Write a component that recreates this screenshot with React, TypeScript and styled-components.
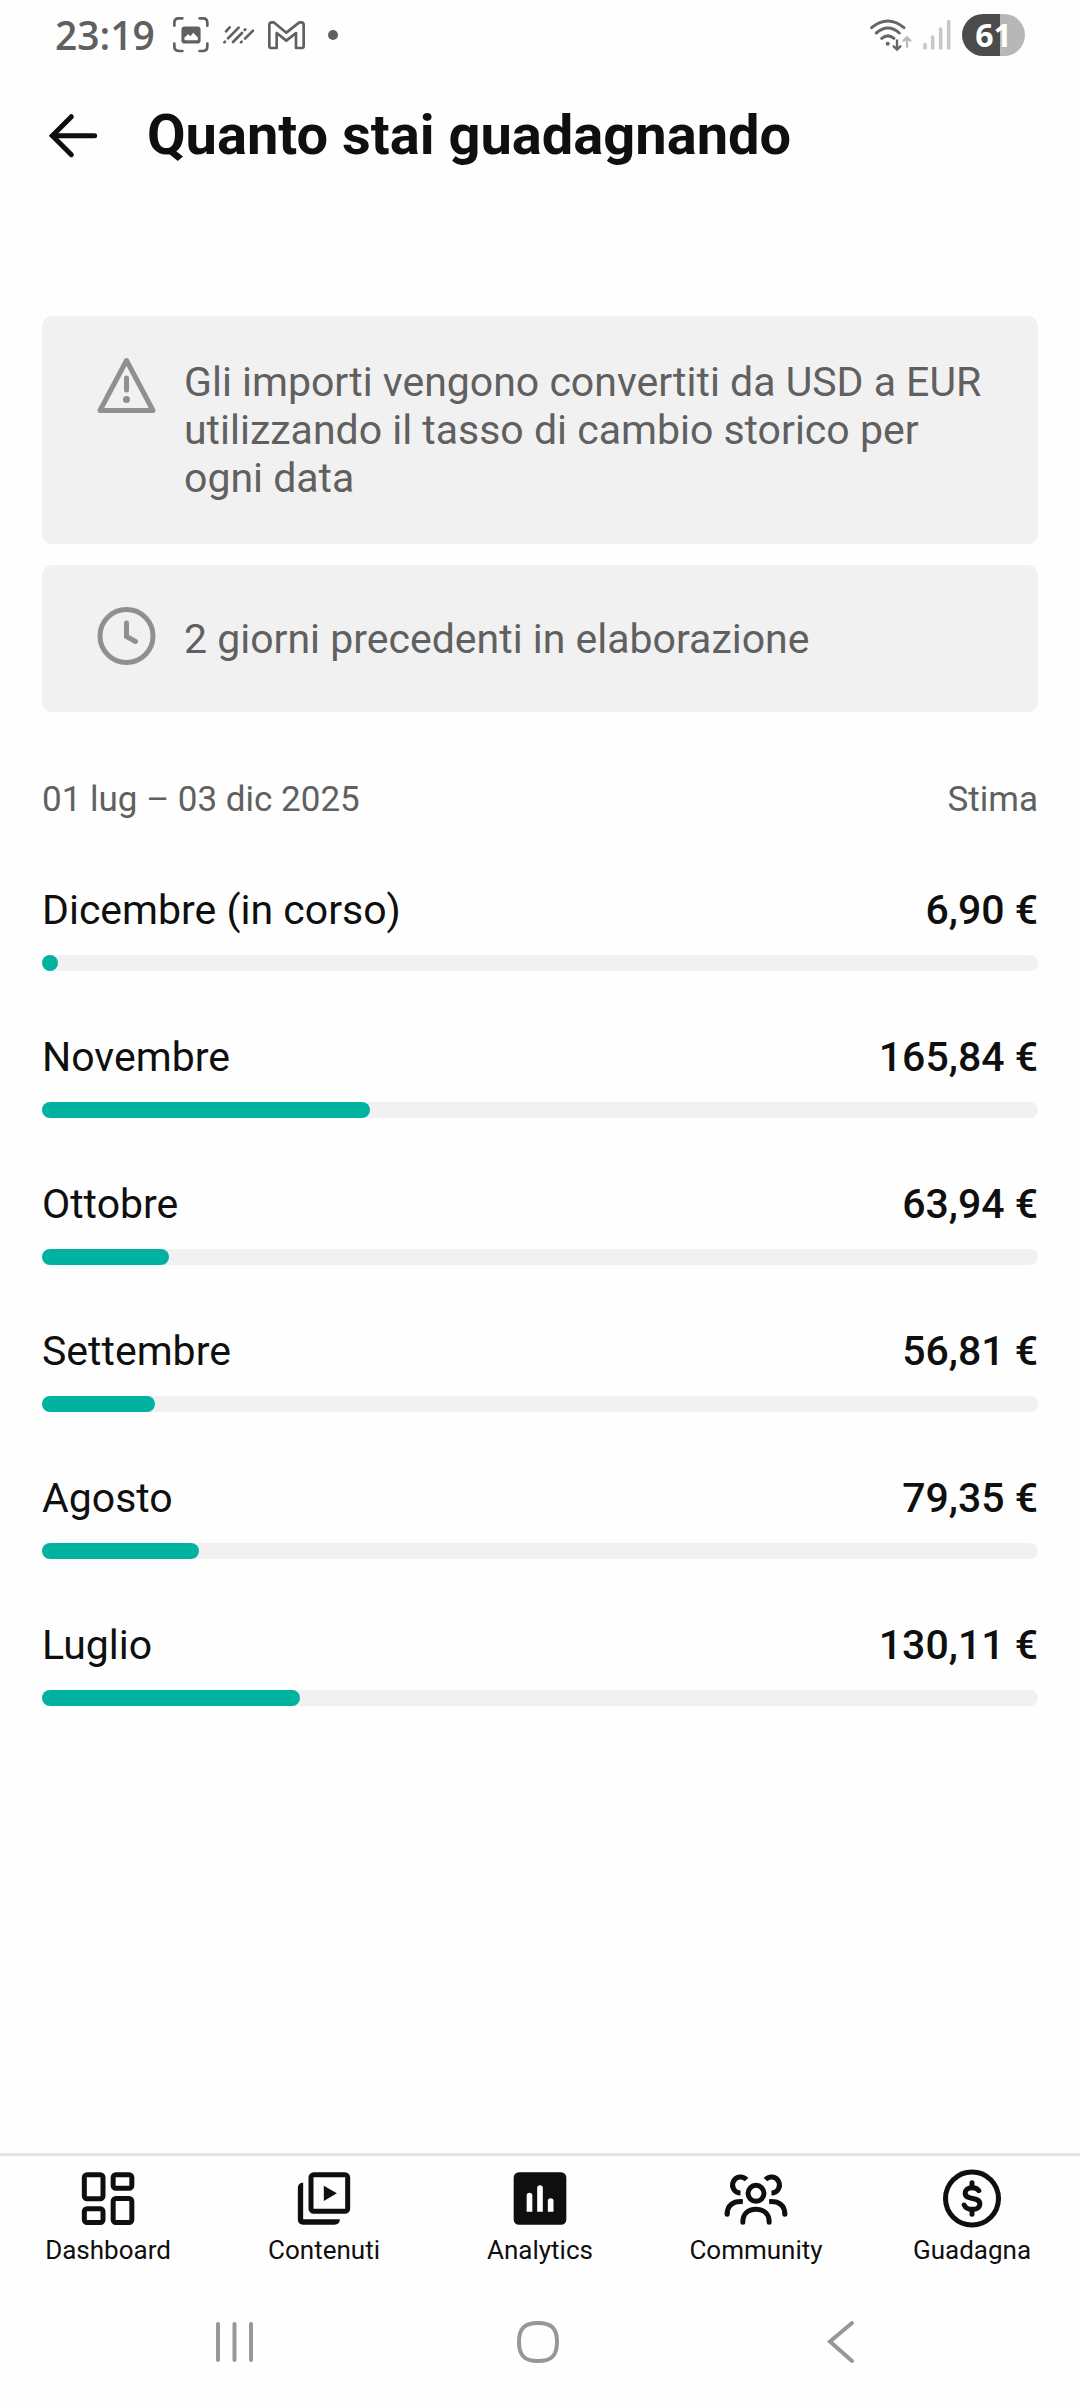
import React from "react";
import styled, { createGlobalStyle } from "styled-components";

const ink = "#0f0f0f";
const muted = "#606060";
const iconGray = "#909090";
const surface = "#f1f1f1";
const teal = "#00b3a1";

const GlobalStyle = createGlobalStyle`
  * { box-sizing: border-box; }
  body {
    margin: 0;
    background: #fefefe;
    color: ${ink};
    font-family: Roboto, "Noto Sans", sans-serif;
  }
  svg { display: block; overflow: visible; flex: none; }
  button { border: 0; padding: 0; background: none; color: inherit; font: inherit; cursor: pointer; }
`;

const Screen = styled.div`
  min-height: 100vh;
  display: flex;
  flex-direction: column;
`;

const StatusBar = styled.div`
  height: 70px;
  padding: 0 55px;
  display: flex;
  align-items: center;
  justify-content: space-between;
  color: ${muted};
`;

const StatusGroup = styled.div<{ $gap: number }>`
  display: flex;
  align-items: center;
  gap: ${(p) => p.$gap}px;
`;

const Clock = styled.time`
  font: 600 39px/48px "Open Sans", "Noto Sans", sans-serif;
`;

const Battery = styled.div`
  width: 63px;
  height: 42px;
  border-radius: 21px;
  display: flex;
  align-items: center;
  justify-content: center;
  background: linear-gradient(90deg, #4b4b4b 61%, #b7b7b7 61%);
  color: #fff;
  font: 700 32px/42px "Open Sans", "Noto Sans", sans-serif;
`;

const Header = styled.header`
  height: 130px;
  padding: 0 42px;
  display: flex;
  align-items: center;
  gap: 42px;
`;

const Title = styled.h1`
  margin: 0;
  font-size: 56px;
  line-height: 64px;
  font-weight: 700;
`;

const Main = styled.main`
  flex: 1;
  padding: 116px 42px 42px;
`;

const Notices = styled.div`
  display: flex;
  flex-direction: column;
  gap: 21px;
`;

const Notice = styled.div`
  padding: 42px 53px;
  display: flex;
  gap: 26px;
  border-radius: 10px;
  background: ${surface};
  color: ${iconGray};
`;

const NoticeText = styled.p<{ $centered?: boolean }>`
  margin: 0;
  align-self: ${(p) => (p.$centered ? "center" : "flex-start")};
  color: ${muted};
  font-size: 41px;
  line-height: 48px;
`;

const NoticeIcon = styled.svg`
  width: 63px;
  height: 63px;
`;

const Period = styled.div`
  margin-top: 66px;
  display: flex;
  justify-content: space-between;
  color: ${muted};
  font-size: 35px;
  line-height: 44px;
`;

const Months = styled.ul`
  margin: 64px 0 0;
  padding: 0;
  list-style: none;
  display: flex;
  flex-direction: column;
  gap: 62px;
`;

const Month = styled.li`
  display: flex;
  flex-direction: column;
  gap: 21px;
`;

const MonthHead = styled.div`
  display: flex;
  justify-content: space-between;
  font-size: 41px;
  line-height: 48px;
`;

const Amount = styled.span`
  font-weight: 500;
`;

const Track = styled.div`
  height: 16px;
  border-radius: 8px;
  background: ${surface};
`;

const Fill = styled.div`
  height: 16px;
  min-width: 16px;
  border-radius: 8px;
  background: ${teal};
`;

const Tabs = styled.nav`
  padding: 11px 0 10px;
  display: grid;
  grid-template-columns: repeat(5, 1fr);
  border-top: 3px solid #e5e5e5;
`;

const Tab = styled.button`
  display: flex;
  flex-direction: column;
  align-items: center;
  gap: 4px;
`;

const TabIcon = styled.svg`
  width: 63px;
  height: 63px;
`;

const TabLabel = styled.span`
  font-size: 26px;
  line-height: 32px;
`;

const SystemNav = styled.nav`
  height: 132px;
  padding: 0 88px 0 84px;
  display: grid;
  grid-template-columns: repeat(3, 1fr);
`;

const SystemKey = styled.button`
  display: flex;
  align-items: center;
  justify-content: center;
  color: #979797;
`;

const months = [
  { name: "Dicembre (in corso)", value: 6.9 },
  { name: "Novembre", value: 165.84 },
  { name: "Ottobre", value: 63.94 },
  { name: "Settembre", value: 56.81 },
  { name: "Agosto", value: 79.35 },
  { name: "Luglio", value: 130.11 },
];
const total = months.reduce((sum, m) => sum + m.value, 0);
const euro = (n: number) => n.toFixed(2).replace(".", ",") + "\u00a0€";

const tabs = [
  {
    label: "Dashboard",
    viewBox: "229.5 81 189 189",
    art: (
      <g fill="none" stroke="currentColor" strokeWidth="15">
        <rect x="251.500" y="104" width="56" height="72" rx="8" />
        <rect x="338" y="104" width="56" height="41" rx="8" />
        <rect x="251.5" y="206.500" width="56" height="41" rx="8" />
        <rect x="338" y="175.500" width="56" height="72" rx="8" />
      </g>
    ),
  },
  {
    label: "Contenuti",
    viewBox: "877.5 81 189 189",
    art: (
      <g>
        <rect x="931.5" y="104" width="110" height="110" rx="8" fill="none" stroke="currentColor" strokeWidth="15" />
        <path d="M970 137v46l39-23z" fill="currentColor" />
        <path
          d="M908 128c-10 0-16 6-16 16v94c0 10 6 16 16 16h94c10 0 16-6 16-16H908z"
          fill="currentColor"
        />
      </g>
    ),
  },
  {
    label: "Analytics",
    viewBox: "325.5 81 189 189",
    art: (
      <g>
        <rect x="339.500" y="96.500" width="158" height="158" rx="16" fill="currentColor" />
        <path
          d="M378.500 215v-48a8.500 8.500 0 0 1 17 0v48zM410 215v-71a8.500 8.500 0 0 1 17 0v71zM442 215v-32a8.500 8.500 0 0 1 17 0v32z"
          fill="#fff"
        />
      </g>
    ),
  },
  {
    label: "Community",
    viewBox: "193.5 81 189 189",
    art: (
      <g fill="none" stroke="currentColor" strokeWidth="15">
        <circle cx="286.500" cy="160" r="24" />
        <path d="M247 247c0-26 16-39 39.500-39s39.500 13 39.500 39" strokeLinecap="round" />
        <path d="M258 119a24 24 0 1 0-18 40" />
        <path d="M315 119a24 24 0 1 1 18 40" />
        <path d="M200 223c0-26 16-40 47-38" />
        <path d="M373 223c0-26-16-40-47-38" />
        <path d="M200 222v1M373 222v1" strokeLinecap="round" />
      </g>
    ),
  },
  {
    label: "Guadagna",
    viewBox: "841.5 81 189 189",
    art: (
      <g fill="none" stroke="currentColor" strokeWidth="15" strokeLinecap="round">
        <circle cx="934.500" cy="175.500" r="79.500" />
        <path d="M934.500 128v13M934.500 210v13" />
        <path d="M955 152c-4-7-12-9-20-9-13 0-21 7-21 17 0 23 44 8 44 31 0 11-9 17-23 17-11 0-20-4-24-13" />
      </g>
    ),
  },
];

export default function App() {
  return (
    <>
      <GlobalStyle />
      <Screen>
        <StatusBar>
          <StatusGroup $gap={18}>
            <Clock>23:19</Clock>
            <StatusGroup $gap={14}>
              <svg width="36" height="36" viewBox="518 53 107 107" aria-hidden="true">
                <path
                  d="M522 79v-9q0-13 13-13h11M597 57h11q12 0 12 13v9M620 132v9q0 13-12 13h-11M546 154h-11q-13 0-13-13v-9"
                  fill="none" stroke="currentColor" strokeWidth="8" strokeLinecap="round"
                />
                <rect x="543" y="81" width="57" height="51" rx="10" fill="currentColor" />
                <path d="M552 120v-6l11-10 7 6 8-10 14 14v6q0 2-2 2h-36q-2 0-2-2z" fill="#fefefe" />
              </svg>
              <svg width="31" height="18" viewBox="666 82 93 54" aria-hidden="true">
                <path
                  d="M686 86l-11 12M713 87l-32 32M670 131l2-2M733 92l-2 2M723 103l-27 27M756 96l-24 24M720 131l2-2"
                  stroke="currentColor" strokeWidth="8" strokeLinecap="round"
                />
              </svg>
              <svg width="37" height="28" viewBox="799 62 109 84" aria-hidden="true">
                <path
                  d="M802 138V74q0-8 8-8h5l38 31 39-31h5q8 0 8 8v64q0 5-5 5h-18V98l-29 23-29-23v45h-17q-5 0-5-5z"
                  fill="none" stroke="currentColor" strokeWidth="8" strokeLinejoin="round"
                />
              </svg>
            </StatusGroup>
            <svg width="20" height="10" viewBox="0 0 20 10" aria-hidden="true">
              <circle cx="10" cy="5" r="5" fill="currentColor" />
            </svg>
          </StatusGroup>
          <StatusGroup $gap={11}>
            <svg width="42" height="32" viewBox="272 58 126 96" aria-hidden="true">
              <g fill="none" stroke="#666" strokeWidth="9" strokeLinecap="round">
                <path d="M277 84q48-40 97 0M291 100q35-30 69 0M307 116q19-15 37 0" />
                <path d="M353 122v25M343 140l10 10 10-10" strokeWidth="7" />
              </g>
              <circle cx="325" cy="132" r="6" fill="#666" />
              <path d="M383 141v-26M373 123l10-10 10 10" fill="none" stroke="#bbb" strokeWidth="7" strokeLinecap="round" />
            </svg>
            <svg width="28" height="30" viewBox="426 62 84 90" aria-hidden="true">
              <path d="M432 136v10M455 113v33M479 89v57M503 67v79" stroke="#c7c7c7" strokeWidth="11" strokeLinecap="round" />
            </svg>
            <Battery>61</Battery>
          </StatusGroup>
        </StatusBar>

        <Header>
          <button type="button" aria-label="Indietro">
            <svg width="63" height="63" viewBox="126 309 189 189" aria-hidden="true">
              <path d="M214 347l-57 57 57 57M157 404h127" fill="none" stroke="currentColor" strokeWidth="15" strokeLinecap="round" />
            </svg>
          </button>
          <Title>Quanto stai guadagnando</Title>
        </Header>

        <Main>
          <Notices>
            <Notice>
              <NoticeIcon viewBox="0 0 63 63" aria-hidden="true">
                <path
                  d="M31.500 2.500L5 52.500H58z"
                  fill="none" stroke="currentColor" strokeWidth="5" strokeLinejoin="round"
                />
                <path d="M31.500 20v12" stroke="currentColor" strokeWidth="5" strokeLinecap="round" />
                <circle cx="31.500" cy="41.500" r="3.500" fill="currentColor" />
              </NoticeIcon>
              <NoticeText>
                Gli importi vengono convertiti da USD a EUR utilizzando il tasso di cambio storico per ogni data
              </NoticeText>
            </Notice>
            <Notice>
              <NoticeIcon viewBox="0 0 63 63" aria-hidden="true">
                <g fill="none" stroke="currentColor" strokeWidth="5">
                  <circle cx="31.500" cy="29" r="26.500" />
                  <path d="M31.500 16v13.500l9 5" strokeLinecap="round" />
                </g>
              </NoticeIcon>
              <NoticeText $centered>2 giorni precedenti in elaborazione</NoticeText>
            </Notice>
          </Notices>

          <Period>
            <span>01 lug – 03 dic 2025</span>
            <span>Stima</span>
          </Period>

          <Months>
            {months.map((m) => (
              <Month key={m.name}>
                <MonthHead>
                  <span>{m.name}</span>
                  <Amount>{euro(m.value)}</Amount>
                </MonthHead>
                <Track>
                  <Fill style={{ width: `${(m.value / total) * 100}%` }} />
                </Track>
              </Month>
            ))}
          </Months>
        </Main>

        <Tabs>
          {tabs.map((t) => (
            <Tab key={t.label} type="button" aria-current={t.label === "Analytics" ? "page" : undefined}>
              <TabIcon viewBox={t.viewBox} aria-hidden="true">{t.art}</TabIcon>
              <TabLabel>{t.label}</TabLabel>
            </Tab>
          ))}
        </Tabs>

        <SystemNav>
          <SystemKey type="button" aria-label="Recenti">
            <svg width="42" height="42" viewBox="0 0 42 42" aria-hidden="true">
              <path d="M4 3v36M20.500 3v36M37 3v36" stroke="currentColor" strokeWidth="4" strokeLinecap="round" />
            </svg>
          </SystemKey>
          <SystemKey type="button" aria-label="Home">
            <svg width="42" height="42" viewBox="0 0 42 42" aria-hidden="true">
              <path
                d="M21 2C34.500 2 40 7.500 40 21S34.500 40 21 40 2 34.500 2 21 7.500 2 21 2z"
                fill="none" stroke="currentColor" strokeWidth="4"
              />
            </svg>
          </SystemKey>
          <SystemKey type="button" aria-label="Indietro">
            <svg width="26" height="42" viewBox="0 0 26 42" aria-hidden="true">
              <path d="M24 2L2 20.500 24 40" fill="none" stroke="currentColor" strokeWidth="4" strokeLinecap="round" />
            </svg>
          </SystemKey>
        </SystemNav>
      </Screen>
    </>
  );
}
